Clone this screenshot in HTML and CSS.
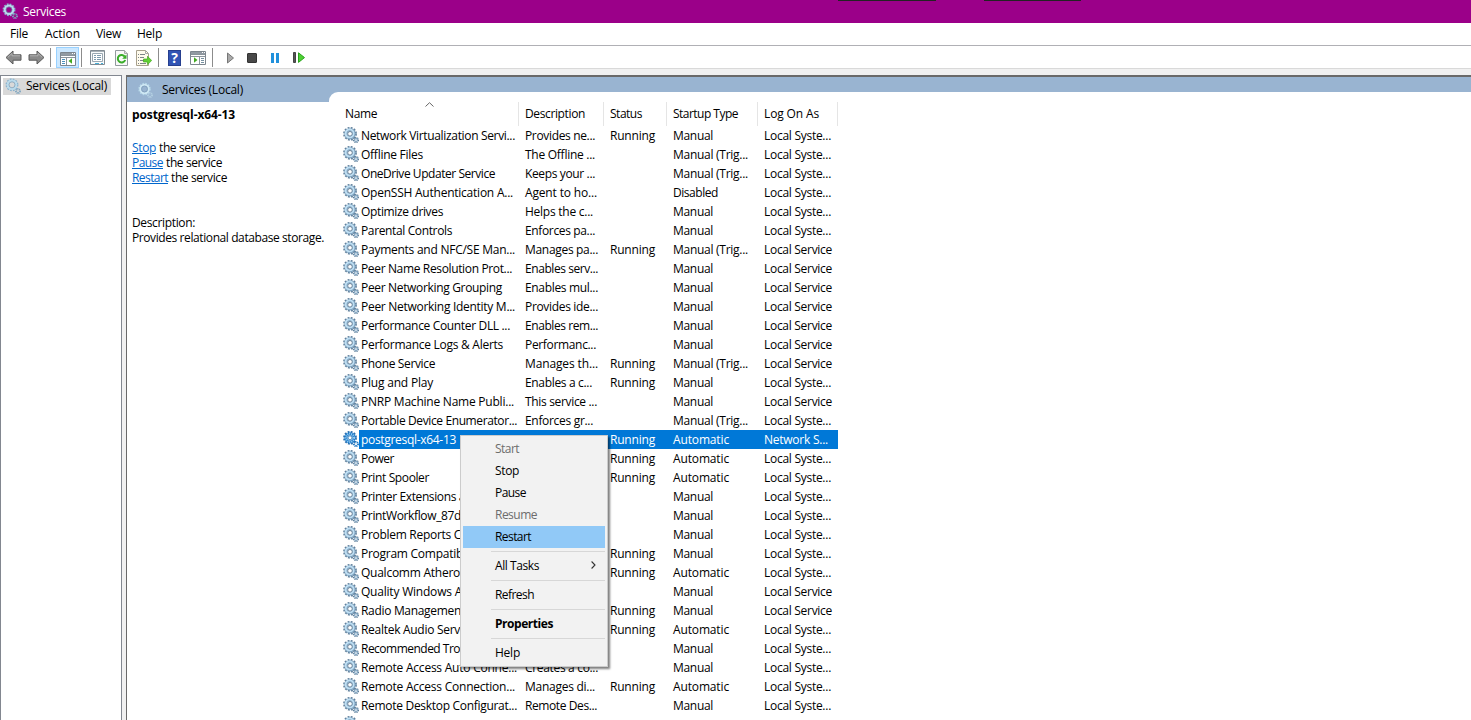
FILE: index.html
```html
<!DOCTYPE html>
<html lang="en">
<head>
<meta charset="utf-8">
<title>Services</title>
<link rel="stylesheet" href="styles.css">
</head>
<body>
<svg class="defs" width="0" height="0">
  <symbol id="gears" viewBox="0 0 16 16">
    <circle cx="7" cy="6.8" r="6" fill="none" stroke="#62819c" stroke-width="1.8" stroke-dasharray="1.9 1.24"/>
    <circle cx="7" cy="6.8" r="4.1" fill="none" stroke="#7fa3c0" stroke-width="3"/>
    <circle cx="6.6" cy="6.4" r="4" fill="none" stroke="#bfdff3" stroke-width="1.9"/>
    <circle cx="7" cy="6.8" r="2.3" fill="#fff" stroke="#56748e" stroke-width=".9"/>
    <circle cx="13" cy="13" r="2.4" fill="none" stroke="#62819c" stroke-width="1.5" stroke-dasharray="1.1 .785"/>
    <circle cx="13" cy="13" r="1.5" fill="#fff" stroke="#86a8c3" stroke-width="1.3"/>
  </symbol>
  <symbol id="gears-light" viewBox="0 0 16 16">
    <circle cx="7" cy="6.8" r="5.6" fill="none" stroke="#8ab4d0" stroke-width="1.7" stroke-dasharray="1.8 1.13"/>
    <circle cx="7" cy="6.8" r="4.2" fill="none" stroke="#b9dbed" stroke-width="2.2"/>
    <circle cx="7" cy="6.8" r="3" fill="none" stroke="#7699b4" stroke-width=".7"/>
    <circle cx="13" cy="13" r="2" fill="none" stroke="#7ea5c0" stroke-width="2" stroke-dasharray="1 .57"/>
  </symbol>
  <symbol id="gears-band" viewBox="0 0 16 16">
    <circle cx="7.5" cy="7" r="5.5" fill="none" stroke="#b4d6e8" stroke-width="1.5" stroke-dasharray="1.7 1.18"/>
    <circle cx="7.5" cy="7" r="4.2" fill="none" stroke="#cfe8f4" stroke-width="2"/>
    <circle cx="7.5" cy="7" r="3" fill="none" stroke="#7899b6" stroke-width=".7"/>
    <circle cx="13" cy="13" r="2" fill="none" stroke="#b4d0e2" stroke-width="2" stroke-dasharray="1 .57"/>
  </symbol>
  <symbol id="gears-selected" viewBox="0 0 16 16">
    <circle cx="7" cy="6.8" r="6" fill="none" stroke="#2c6fae" stroke-width="1.8" stroke-dasharray="1.9 1.24"/>
    <circle cx="7" cy="6.8" r="4.1" fill="none" stroke="#1d7dcc" stroke-width="3"/>
    <circle cx="7" cy="6.8" r="4.1" fill="none" stroke="#9ccdf0" stroke-width="2" stroke-dasharray="1 1"/>
    <circle cx="7" cy="6.8" r="2" fill="#fff" stroke="#1769ad" stroke-width=".8"/>
    <circle cx="13" cy="13" r="2" fill="none" stroke="#1b74be" stroke-width="2" stroke-dasharray="1 .57"/>
  </symbol>
  <symbol id="arrow" viewBox="0 0 17 15">
    <path d="M1 7.5 8 1v3.8h8v5.4H8V14z" fill="#8b8b8b" stroke="#5b5b5b"/>
    <path d="M2.8 7.3 7 3.4v2.4h8" fill="none" stroke="#b2b2b2"/>
  </symbol>
</svg>

<header class="titlebar">
  <svg class="gear"><use href="#gears-light"/></svg>
  <span data-w="43">Services</span>
  <i class="notch first"></i><i class="notch second"></i>
</header>
<nav class="menubar">
  <span data-w="18">File</span><span data-w="35">Action</span><span data-w="25">View</span><span data-w="25">Help</span>
</nav>
<div class="toolbar">
  <svg class="t-back" width="17" height="15"><use href="#arrow"/></svg>
  <svg class="t-forward" width="17" height="15"><use href="#arrow"/></svg>
  <i class="sep"></i>
  <span class="pressed"><svg width="16" height="14" viewBox="0 0 16 14">
    <path d="M.5.5h15v13H.5z" fill="#fff" stroke="#7d868e"/><path d="M1 1h14v2H1z" fill="#929ba3"/><path d="M1 3.5h14M1 5.5h14M6.5 5v8" stroke="#8b949c"/><path d="M2 7.5h3M2 9.5h3M2 11.5h3" stroke="#4c91bd"/><path d="M12 6.2v5.6L8.5 9z" fill="#41aa20"/><path d="M12 1.5h1M14 1.5h1" stroke="#fff"/></svg></span>
  <i class="sep s2"></i>
  <svg class="t-props" width="16" height="16" viewBox="0 0 16 16"><path d="M.5.5h14v14H.5z" fill="#f8fafb" stroke="#818b93"/><path d="M1 1.5h13" stroke="#a9b2b9"/><path d="M2.5 3.5h10v8h-10z" fill="#fff" stroke="#9aa8b2"/><path d="M4 5.5h2M7 5.5h4M4 7.5h2M7 7.5h4M4 9.5h2M7 9.5h4" stroke="#7d9aae"/><path d="M5 13.5h4M11 13.5h2" stroke="#46aed8"/></svg>
  <svg class="t-refresh" width="13" height="16" viewBox="0 0 13 16"><path d="M.5.5h9l3 3v12H.5z" fill="#f9f9f9" stroke="#92999e"/><path d="M9.5.5v3h3" fill="#ddd" stroke="#aaa"/><path d="M9.8 6.6A3.8 3.8 0 1 0 10.2 10" fill="none" stroke="#39ad28" stroke-width="2"/><path d="M11.5 4.5v4.2H7.2z" fill="#39ad28"/></svg>
  <svg class="t-export" width="16" height="16" viewBox="0 0 16 16"><path d="M.5.5h9l3 3v12H.5z" fill="#fffbed" stroke="#a8a08c"/><path d="M9.5.5v3h3" fill="none" stroke="#aaa"/><path d="M2 4.5h1M4 4.5h5M2 7.5h1M4 7.5h4M2 10.5h1M4 10.5h4M2 13.5h1M4 13.5h6" stroke="#7e8588"/><path d="M7.5 9h4V6.3l4.2 4.2-4.2 4.1V12h-4z" fill="#62cf35" stroke="#43a91f" stroke-width=".7"/></svg>
  <i class="sep s3"></i>
  <span class="help-button">?</span>
  <svg class="t-pane" width="16" height="14" viewBox="0 0 16 14"><path d="M.5.5h15v13H.5z" fill="#fff" stroke="#7d868e"/><path d="M1 1h14v2H1z" fill="#929ba3"/><path d="M1 3.5h14M1 5.5h14M9.5 5v8" stroke="#8b949c"/><path d="M11 7.5h3M11 9.5h3M11 11.5h3" stroke="#7790a0"/><path d="M4 6.2v5.6L7.5 9z" fill="#41aa20"/><path d="M12 1.5h1M14 1.5h1" stroke="#fff"/></svg>
  <i class="sep s4"></i>
  <svg class="t-play" width="7" height="12" viewBox="0 0 7 12"><path d="M.5 1v10L6.5 6z" fill="#aaa" stroke="#777"/></svg>
  <i class="t-stop"></i>
  <i class="t-pause"></i>
  <svg class="t-restart" width="13" height="12" viewBox="0 0 13 12"><path d="M.5.5h2v10h-2z" fill="#555" stroke="#444"/><path d="M5.5.8v9.6L11.5 5.6z" fill="#4ed034" stroke="#29a51c"/></svg>
</div>

<main class="workspace">
  <aside class="tree">
    <div class="tree-node"><svg class="gear"><use href="#gears-light"/></svg><span data-w="81">Services (Local)</span></div>
  </aside>
  <section class="pane">
    <div class="details">
      <div class="band"><svg class="gear"><use href="#gears-band"/></svg><span data-w="81">Services (Local)</span></div>
      <div class="info">
        <p><b data-w="103">postgresql-x64-13</b></p>
        <p class="gap"><a data-w="24">Stop</a><span class="after" data-w="56">the service</span></p>
        <p><a data-w="31">Pause</a><span class="after" data-w="56">the service</span></p>
        <p><a data-w="36">Restart</a><span class="after" data-w="56">the service</span></p>
        <p class="gap2"><span data-w="63">Description:</span></p>
        <p><span data-w="192">Provides relational database storage.</span></p>
      </div>
    </div>
    <div class="list">
      <div class="row head">
        <div><span data-w="32">Name</span><svg class="sort" width="9" height="5" viewBox="0 0 9 5"><path d="M.5 4.5 4.5.7l4 3.8" fill="none" stroke="#666"/></svg></div>
        <div><span data-w="60">Description</span></div>
        <div><span data-w="32">Status</span></div>
        <div><span data-w="65">Startup Type</span></div>
        <div><span data-w="55">Log On As</span></div>
      </div>
      <div id="rows"></div>
    </div>
  </section>
</main>

<div class="context-menu">
  <div class="item off"><span data-w="24">Start</span></div>
  <div class="item"><span data-w="24">Stop</span></div>
  <div class="item"><span data-w="31">Pause</span></div>
  <div class="item off"><span data-w="42">Resume</span></div>
  <div class="item hot"><span data-w="36">Restart</span></div>
  <hr>
  <div class="item"><span data-w="44">All Tasks</span><svg class="more" width="5" height="8" viewBox="0 0 5 8"><path d="M.6.5 4 4 .6 7.5" fill="none" stroke="#333" stroke-width="1.1"/></svg></div>
  <hr>
  <div class="item"><span data-w="39">Refresh</span></div>
  <hr>
  <div class="item"><b data-w="58">Properties</b></div>
  <hr>
  <div class="item"><span data-w="25">Help</span></div>
</div>
<script src="app.js"></script>
</body>
</html>
```
FILE: styles.css
```css
* { box-sizing: border-box; }
html, body { height: 100%; }
body {
  margin: 0;
  display: flex;
  flex-direction: column;
  overflow: hidden;
  background: #f0f0f0;
  color: #000;
  font: 12px/15px "Open Sans", "Noto Sans", sans-serif;
  white-space: nowrap;
}
p { margin: 0; }
[data-w] { display: inline-block; }
.defs { position: absolute; }
.gear { width: 16px; height: 16px; flex: none; }

.titlebar {
  position: relative;
  height: 23px;
  flex: none;
  display: flex;
  align-items: center;
  gap: 5px;
  padding-left: 2px;
  background: #9b0089;
  color: #fff;
}
.titlebar .gear { margin-bottom: 2px; }
.notch { position: absolute; top: 0; height: 1px; background: #222; }
.notch.first { left: 838px; width: 98px; }
.notch.second { left: 984px; width: 97px; }

.menubar {
  height: 23px;
  flex: none;
  display: flex;
  align-items: center;
  gap: 17px;
  padding: 0 0 1px 10px;
  background: #fff;
  border-bottom: 1px solid #b0b0b5;
}
.menubar span:nth-child(3) { margin-left: -1px; }
.menubar span:nth-child(4) { margin-left: -1px; }
.toolbar {
  height: 23px;
  flex: none;
  display: flex;
  align-items: center;
  padding: 1px 0 0 5px;
  background: #fff;
  border-bottom: 1px solid #d9d9d9;
}
.toolbar > * { flex: none; }
.t-forward { margin-left: 6px; transform: scaleX(-1); }
.sep { width: 1px; height: 19px; margin-left: 5px; background: #8c8c8c; }
.pressed {
  width: 23px;
  height: 21px;
  margin-left: 5px;
  display: grid;
  place-items: center;
  padding-top: 2px;
  background: #cce8ff;
  border: 1px solid #99d1ff;
}
.s2 { margin-left: 2px; }
.t-props { margin-left: 8px; }
.t-refresh { margin-left: 9px; }
.t-export { margin-left: 8px; }
.s3 { margin-left: 6px; }
.help-button {
  width: 13px;
  height: 16px;
  margin-left: 9px;
  background: #3154b4;
  border: 1px solid #263f8f;
  color: #fff;
  font: bold 14px/14px "Open Sans", sans-serif;
  text-align: center;
}
.t-pane { margin-left: 9px; }
.s4 { margin-left: 6px; }
.t-play { margin-left: 14px; }
.t-stop { width: 10px; height: 10px; margin-left: 13px; background: #484848; border: 1px solid #333; border-radius: 1px; }
.t-pause { width: 8px; height: 10px; margin-left: 14px; border: solid #2191dc; border-width: 0 3px; }
.t-restart { margin-left: 14px; }

.workspace { flex: 1; min-height: 0; display: flex; gap: 4px; padding-top: 6px; }
.tree { width: 122px; background: #fff; border: 1px solid #828790; border-bottom: 0; padding: 2px; }
.tree-node { display: flex; align-items: center; gap: 5px; width: 108px; height: 17px; padding: 0 0 1px 2px; background: #d9d9d9; }
.tree-node span { margin-top: -1px; }
.pane {
  flex: 1;
  display: flex;
  background: #99b4d1;
  border-top: 2px solid #696969;
  border-left: 1px solid #696969;
}
.details { width: 202px; display: flex; flex-direction: column; }
.band { height: 25px; flex: none; display: flex; align-items: center; gap: 9px; padding-left: 10px; }
.info { flex: 1; background: #fff; padding: 5px 0 0 5px; }
.info p { display: flex; }
.info b { font-weight: 700; }
.info .gap { margin-top: 18px; }
.info .gap2 { margin-top: 30px; }
.info a { color: #0066cc; text-decoration: underline; }
.after { margin-left: 3px; }

.list { flex: 1; margin-top: 15px; background: #fff; border-top-left-radius: 9px; overflow: hidden; }
.row {
  width: 509px;
  height: 19px;
  display: grid;
  grid-template-columns: 190px 85px 63px 91px 80px;
  align-items: center;
}
.row > div { padding-left: 6px; display: flex; align-items: center; height: 100%; overflow: hidden; }
.row > .name { padding-left: 14px; }
.name span { margin-left: 2px; }
.name .gear { margin-bottom: 1px; }
.head { height: 24px; margin: 10px 0 0; }
.head > div { position: relative; border-right: 1px solid #e5e5e5; padding-bottom: 2px; }
.head > div:first-child { padding-left: 16px; }
.sort { position: absolute; left: 96px; top: 0; }
.selected { color: #fff; background: linear-gradient(to right, #fff 30px, #0078d7 30px); }

.context-menu {
  position: absolute;
  left: 460px;
  top: 435px;
  width: 148px;
  height: 232px;
  padding: 2px;
  background: #f2f2f2;
  border: 1px solid #ccc;
  box-shadow: 2px 2px 2px rgba(0, 0, 0, .5);
}
.item { height: 22px; display: flex; align-items: center; padding: 0 0 2px 32px; }
.off { color: #6d6d6d; }
.hot { background: #91c9f7; }
.context-menu hr { height: 1px; margin: 3px 0 3px 28px; border: 0; background: #d7d7d7; }
.more { margin-left: 52px; }
```
FILE: app.js
```js
// Each service: [name, name width, description, description width, status, startup, log on]
const widths = { Running: 45, Manual: 40, 'Manual (Trig...': 75, Disabled: 45, Automatic: 56, 'Local Syste...': 67, 'Local Service': 68, 'Network S...': 64 };
const M = 'Manual', T = 'Manual (Trig...', A = 'Automatic', R = 'Running';
const S = 'Local Syste...', L = 'Local Service';
const services = [
  ['Network Virtualization Servi...', 154, 'Provides ne...', 70, R, M, S],
  ['Offline Files', 62, 'The Offline ...', 70, '', T, S],
  ['OneDrive Updater Service', 134, 'Keeps your ...', 70, '', T, S],
  ['OpenSSH Authentication A...', 152, 'Agent to ho...', 72, '', 'Disabled', S],
  ['Optimize drives', 82, 'Helps the c...', 68, '', M, S],
  ['Parental Controls', 91, 'Enforces pa...', 70, '', M, S],
  ['Payments and NFC/SE Man...', 154, 'Manages pa...', 73, R, T, L],
  ['Peer Name Resolution Prot...', 151, 'Enables serv...', 73, '', M, L],
  ['Peer Networking Grouping', 141, 'Enables mul...', 73, '', M, L],
  ['Peer Networking Identity M...', 154, 'Provides ide...', 73, '', M, L],
  ['Performance Counter DLL ...', 149, 'Enables rem...', 73, '', M, L],
  ['Performance Logs & Alerts', 142, 'Performanc...', 71, '', M, L],
  ['Phone Service', 74, 'Manages th...', 73, R, T, L],
  ['Plug and Play', 72, 'Enables a c...', 67, R, M, S],
  ['PNRP Machine Name Publi...', 153, 'This service ...', 72, '', M, L],
  ['Portable Device Enumerator...', 156, 'Enforces gr...', 68, '', T, S],
  ['postgresql-x64-13', 95, '', 0, R, A, 'Network S...'],
  ['Power', 33, '', 0, R, A, S],
  ['Print Spooler', 68, '', 0, R, A, S],
  ['Printer Extensions a', 104, '', 0, '', M, S],
  ['PrintWorkflow_87d', 100, '', 0, '', M, S],
  ['Problem Reports C', 100, '', 0, '', M, S],
  ['Program Compatib', 102, '', 0, R, M, S],
  ['Qualcomm Athero', 99, '', 0, R, A, S],
  ['Quality Windows A', 101, '', 0, '', M, L],
  ['Radio Managemen', 100, '', 0, R, M, L],
  ['Realtek Audio Serv', 99, '', 0, R, A, S],
  ['Recommended Tro', 99, '', 0, '', M, S],
  ['Remote Access Auto Conne...', 156, 'Creates a co...', 73, '', M, S],
  ['Remote Access Connection...', 154, 'Manages di...', 70, R, A, S],
  ['Remote Desktop Configurat...', 156, 'Remote Des...', 72, '', M, S],
  ['', 0, '', 0, '', '', '']
];

const cell = (text, w) => text ? `<span data-w="${w}">${text.replace('&', '&amp;')}</span>` : '';
document.getElementById('rows').innerHTML = services.map(([name, nw, desc, dw, status, startup, logon]) => {
  const selected = name.startsWith('postgresql');
  return `<div class="row${selected ? ' selected' : ''}">
    <div class="name"><svg class="gear"><use href="#${selected ? 'gears-selected' : 'gears'}"/></svg>${cell(name, nw)}</div>
    <div>${cell(desc, dw)}</div>
    <div>${cell(status, widths[status])}</div>
    <div>${cell(startup, widths[startup])}</div>
    <div>${cell(logon, widths[logon])}</div>
  </div>`;
}).join('');

// Spread each label's letters so that it takes its given width.
document.querySelectorAll('[data-w]').forEach(el => {
  const natural = el.getBoundingClientRect().width;
  const spacing = (Number(el.dataset.w) - natural) / el.textContent.length;
  el.style.letterSpacing = spacing.toFixed(3) + 'px';
});
```
